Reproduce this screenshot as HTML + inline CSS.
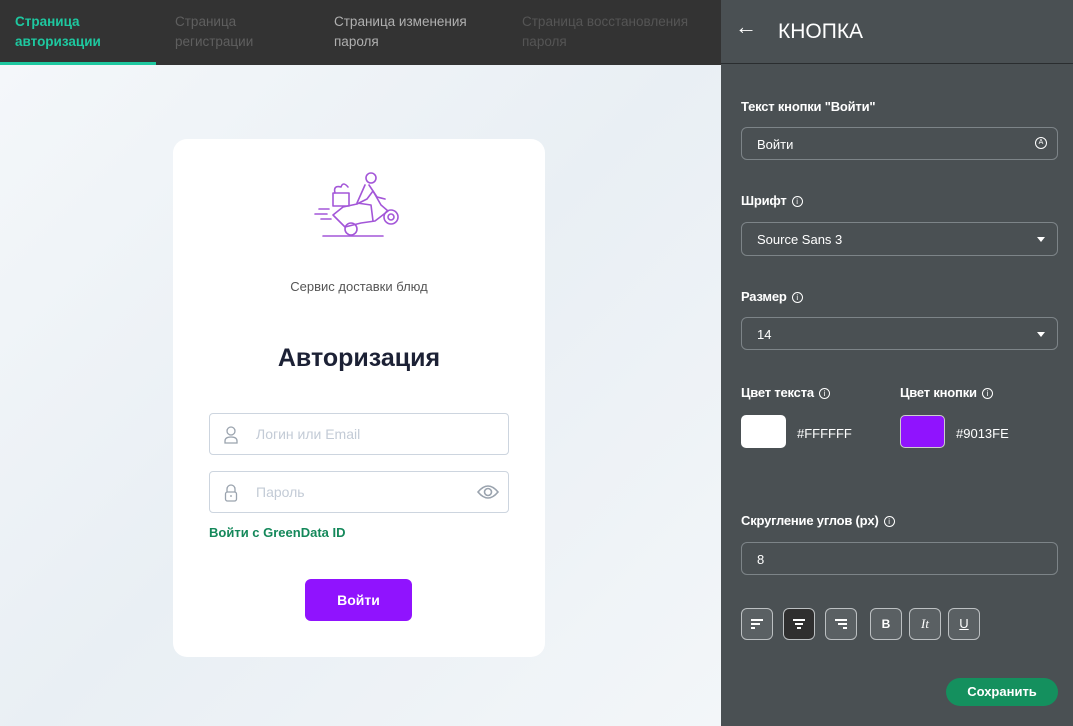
<!DOCTYPE html>
<html><head><meta charset="utf-8"><style>
*{box-sizing:border-box;margin:0;padding:0}
body{width:1073px;height:726px;overflow:hidden;font-family:"Liberation Sans","DejaVu Sans",sans-serif;position:relative;background:#eef3f7}
.top{position:absolute;left:0;top:0;width:721px;height:65px;background:#333333}
.tab{position:absolute;top:12px;font-size:13.5px;line-height:20px}
.main{position:absolute;left:0;top:65px;width:721px;height:661px;background:linear-gradient(135deg,#f4f7fa 0%,#e9eff4 50%,#f3f6f9 100%)}
.card{position:absolute;left:173px;top:139px;width:372px;height:518px;background:#fff;border-radius:14px}
.inp{position:absolute;left:36px;width:300px;height:42px;border:1px solid #cdd5df;border-radius:4px;font-size:14px;color:#c3cbd6}
.panel{position:absolute;left:721px;top:0;width:352px;height:726px;background:#4a5053;color:#fff}
.lbl{position:absolute;left:20px;font-size:13px;font-weight:bold;letter-spacing:-0.2px}
.fld{position:absolute;left:20px;width:317px;height:34px;border:1px solid #7d8488;border-radius:6px;font-size:13px;padding:9px 15px}
.i{display:inline-block;width:11px;height:11px;border:1px solid #fff;border-radius:50%;font-size:8px;text-align:center;line-height:9px;margin-left:5px;vertical-align:1px;font-weight:normal}
.caret{position:absolute;right:12px;top:14px;border-left:4px solid transparent;border-right:4px solid transparent;border-top:5px solid #fff}
.b{position:absolute;top:608px;width:32px;height:32px;border:1px solid #bcc0c2;border-radius:6px;background:#5a6063;font-size:13px;text-align:center;line-height:30px}
</style></head><body>
<div class="top">
<div class="tab" style="left:15px;color:#1ec8a0;font-weight:bold">Страница<br>авторизации</div>
<div style="position:absolute;left:0;top:62px;width:156px;height:3px;background:#1ec8a0"></div>
<div class="tab" style="left:175px;color:#5f5f5f">Страница<br>регистрации</div>
<div class="tab" style="left:334px;color:#b0b0b0">Страница изменения<br>пароля</div>
<div class="tab" style="left:522px;color:#555">Страница восстановления<br>пароля</div>
</div>
<div class="main"></div>
<div class="card">
<svg style="position:absolute;left:140px;top:30px" width="90" height="70" viewBox="0 0 90 70" fill="none" stroke="#a356d8" stroke-width="1.6" stroke-linecap="round" stroke-linejoin="round">
<line x1="10" y1="67" x2="70" y2="67"/><line x1="2" y1="45" x2="14" y2="45"/><line x1="6" y1="40" x2="16" y2="40"/><line x1="8" y1="50" x2="18" y2="50"/>
<circle cx="38" cy="60" r="6"/><circle cx="78" cy="48" r="7"/><circle cx="78" cy="48" r="3"/>
<path d="M20 46 L32 58 L48 54 L62 52 L75 42 L68 36 L60 22 L54 30 L44 35 L30 38 Z"/>
<rect x="20" y="24" width="16" height="13"/><path d="M22 24 q-2-8 6-6 q2-6 7 0"/>
<circle cx="58" cy="9" r="5"/><path d="M52 16 L44 34 L58 36 L60 52 M56 16 L64 28 L72 30"/>
</svg>
<div style="position:absolute;left:0;width:372px;top:140px;text-align:center;font-size:13px;color:#555">Сервис доставки блюд</div>
<div style="position:absolute;left:0;width:372px;top:205px;text-align:center;font-size:25px;font-weight:bold;color:#1c2135">Авторизация</div>
<div class="inp" style="top:274px"><svg style="position:absolute;left:14px;top:12px" width="14" height="18" fill="none" stroke="#9aa3ae" stroke-width="1.3"><circle cx="7" cy="5" r="4"/><path d="M1 17 v-2 q0-4 6-4 q6 0 6 4 v2 z"/></svg><span style="position:absolute;left:46px;top:12px">Логин или Email</span></div>
<div class="inp" style="top:332px"><svg style="position:absolute;left:14px;top:12px" width="14" height="18" fill="none" stroke="#9aa3ae" stroke-width="1.3"><path d="M3 8 v-3 a4 4 0 0 1 8 0 v3"/><rect x="1.5" y="8" width="11" height="9" rx="2"/><line x1="7" y1="11" x2="7" y2="13"/></svg><span style="position:absolute;left:46px;top:12px">Пароль</span>
<svg style="position:absolute;left:267px;top:12px" width="22" height="16" fill="none" stroke="#9aa3ae" stroke-width="1.6"><path d="M1 8 q10-12 20 0 q-10 12-20 0z"/><circle cx="11" cy="8" r="3.5"/></svg></div>
<div style="position:absolute;left:36px;top:386px;font-size:13px;font-weight:bold;color:#14885a">Войти с GreenData ID</div>
<div style="position:absolute;left:132px;top:440px;width:107px;height:42px;background:#9013fe;border-radius:6px;color:#fff;font-weight:bold;font-size:14px;text-align:center;line-height:42px">Войти</div>
</div>
<div class="panel">
<div style="position:absolute;left:14px;top:14px;font-size:22px">←</div>
<div style="position:absolute;left:57px;top:20px;font-size:21px">КНОПКА</div>
<div style="position:absolute;left:0;top:63px;width:352px;height:1px;background:#2a2d2f"></div>
<div class="lbl" style="top:99px">Текст кнопки "Войти"</div>
<div class="fld" style="top:127px;height:33px">Войти<span style="position:absolute;right:10px;top:9px;width:12px;height:12px;border:1px solid #fff;border-radius:50%;font-size:7px;text-align:center;line-height:10px">A</span></div>
<div class="lbl" style="top:193px">Шрифт<span class="i">i</span></div>
<div class="fld" style="top:222px">Source Sans 3<span class="caret"></span></div>
<div class="lbl" style="top:289px">Размер<span class="i">i</span></div>
<div class="fld" style="top:317px;height:33px">14<span class="caret"></span></div>
<div class="lbl" style="top:385px">Цвет текста<span class="i">i</span></div>
<div class="lbl" style="left:179px;top:385px">Цвет кнопки<span class="i">i</span></div>
<div style="position:absolute;left:20px;top:415px;width:45px;height:33px;background:#fff;border-radius:5px"></div>
<div style="position:absolute;left:76px;top:426px;font-size:13px">#FFFFFF</div>
<div style="position:absolute;left:179px;top:415px;width:45px;height:33px;background:#9013fe;border:1px solid #ccc;border-radius:5px"></div>
<div style="position:absolute;left:235px;top:426px;font-size:13px">#9013FE</div>
<div class="lbl" style="top:513px">Скругление углов (px)<span class="i">i</span></div>
<div class="fld" style="top:542px;height:33px">8</div>
<div class="b" style="left:20px"><svg width="14" height="12" style="margin-top:9px" stroke="#fff" stroke-width="2"><line x1="1" y1="2" x2="13" y2="2"/><line x1="1" y1="6" x2="10" y2="6"/><line x1="1" y1="10" x2="5" y2="10"/></svg></div>
<div class="b" style="left:62px;background:#2f2f2f"><svg width="14" height="12" style="margin-top:9px" stroke="#fff" stroke-width="2"><line x1="1" y1="2" x2="13" y2="2"/><line x1="3" y1="6" x2="11" y2="6"/><line x1="5" y1="10" x2="9" y2="10"/></svg></div>
<div class="b" style="left:104px"><svg width="14" height="12" style="margin-top:9px" stroke="#fff" stroke-width="2"><line x1="1" y1="2" x2="13" y2="2"/><line x1="4" y1="6" x2="13" y2="6"/><line x1="9" y1="10" x2="13" y2="10"/></svg></div>
<div class="b" style="left:149px;font-weight:bold;font-size:12px">B</div>
<div class="b" style="left:188px;font-family:'Liberation Serif',serif;font-style:italic">It</div>
<div class="b" style="left:227px;text-decoration:underline">U</div>
<div style="position:absolute;left:225px;top:678px;width:112px;height:28px;background:#14905e;border-radius:14px;font-size:13px;font-weight:bold;text-align:center;line-height:28px">Сохранить</div>
</div>
</body></html>
